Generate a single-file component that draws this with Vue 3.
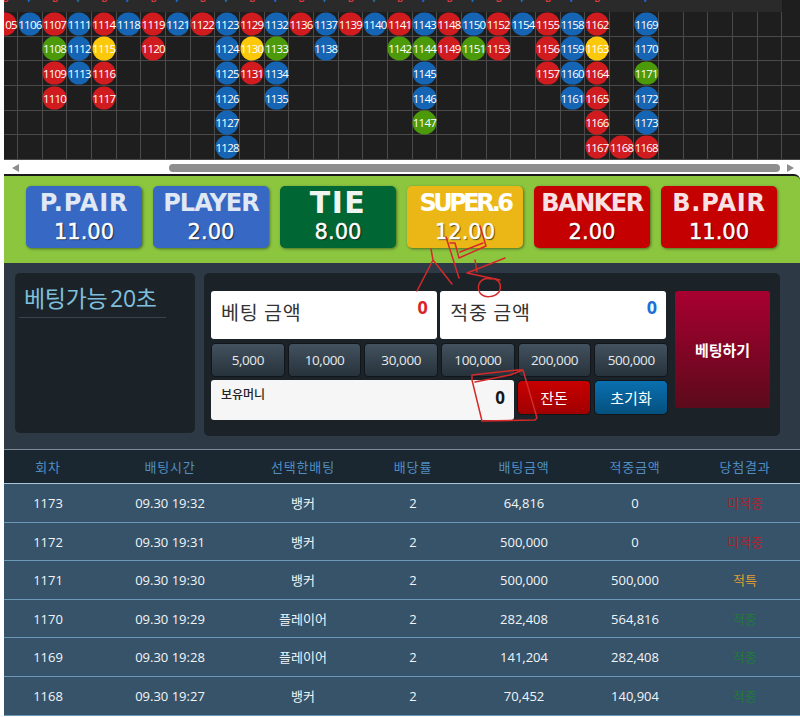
<script setup>
// 출목표 데이터: [번호, 색] 열 단위
const roadColumns = [
  ['1105r'],
  ['1106b'],
  ['1107r', '1108g', '1109r', '1110r'],
  ['1111b', '1112b', '1113b'],
  ['1114r', '1115y', '1116r', '1117r'],
  ['1118b'],
  ['1119r', '1120r'],
  ['1121b'],
  ['1122r'],
  ['1123b', '1124b', '1125b', '1126b', '1127b', '1128b'],
  ['1129r', '1130y', '1131r'],
  ['1132b', '1133g', '1134b', '1135b'],
  ['1136r'],
  ['1137b', '1138b'],
  ['1139r'],
  ['1140b'],
  ['1141r', '1142g'],
  ['1143b', '1144g', '1145b', '1146b', '1147g'],
  ['1148r', '1149r'],
  ['1150b', '1151g'],
  ['1152r', '1153r'],
  ['1154b'],
  ['1155r', '1156r', '1157r'],
  ['1158b', '1159b', '1160b', '1161b'],
  ['1162r', '1163y', '1164r', '1165r', '1166r', '1167r'],
  [null, null, null, null, null, '1168r'],
  ['1169b', '1170b', '1171g', '1172b', '1173b', '1168r']
]

const balls = []
roadColumns.forEach((col, c) => {
  col.forEach((v, r) => {
    if (v) balls.push({ key: c + '-' + r, c: c + 1, r: r + 1, no: v.slice(0, 4), color: v[4] })
  })
})

const cells = Array.from({ length: 33 * 6 }, (_, i) => i)
const flags = Array.from({ length: 27 }, (_, i) => (i === 25 ? '' : i === 26 ? 'P' : i % 2 === 0 ? 'B' : 'P'))

const odds = [
  { name: 'P.PAIR', val: '11.00', cls: 'blue wide' },
  { name: 'PLAYER', val: '2.00', cls: 'blue tight' },
  { name: 'TIE', val: '8.00', cls: 'green big' },
  { name: 'SUPER.6', val: '12.00', cls: 'yellow tighter' },
  { name: 'BANKER', val: '2.00', cls: 'red tight2' },
  { name: 'B.PAIR', val: '11.00', cls: 'red wide' }
]

const chips = ['5,000', '10,000', '30,000', '100,000', '200,000', '500,000']
const heads = ['회차', '배팅시간', '선택한배팅', '배당률', '배팅금액', '적중금액', '당첨결과']
const rows = [
  ['1173', '09.30 19:32', '뱅커', '2', '64,816', '0', '미적중', 'miss'],
  ['1172', '09.30 19:31', '뱅커', '2', '500,000', '0', '미적중', 'miss'],
  ['1171', '09.30 19:30', '뱅커', '2', '500,000', '500,000', '적특', 'draw'],
  ['1170', '09.30 19:29', '플레이어', '2', '282,408', '564,816', '적중', 'hit'],
  ['1169', '09.30 19:28', '플레이어', '2', '141,204', '282,408', '적중', 'hit'],
  ['1168', '09.30 19:27', '뱅커', '2', '70,452', '140,904', '적중', 'hit']
]
</script>

<template>
  <div class="page">
    <div class="road">
      <div class="flags">
        <span v-for="(f, i) in flags" :key="i" class="flag" :class="f === 'B' ? 'fb' : 'fp'">{{ f }}</span>
      </div>
      <div class="grid-wrap">
        <div class="grid">
          <i v-for="n in cells" :key="n" class="cell"></i>
        </div>
        <div class="grid balls">
          <span
            v-for="b in balls"
            :key="b.key"
            class="ball"
            :class="'c-' + b.color"
            :style="{ gridColumn: b.c, gridRow: b.r }"
          >{{ b.no }}</span>
        </div>
      </div>
    </div>

    <div class="scrollbar">
      <span class="arrow left"></span>
      <div class="track"><div class="thumb"></div></div>
      <span class="arrow right"></span>
    </div>

    <div class="main">
      <div class="odds">
        <div v-for="o in odds" :key="o.name" class="odd" :class="o.cls">
          <div class="odd-name">{{ o.name }}</div>
          <div class="odd-val">{{ o.val }}</div>
        </div>
      </div>

      <div class="bet">
        <div class="timer">
          <div class="timer-title">베팅가능 20초</div>
        </div>
        <div class="form">
          <div class="form-left">
            <div class="amounts">
              <div class="amount">
                <span class="amount-label">베팅 금액</span>
                <b class="amount-val red-t">0</b>
              </div>
              <div class="amount">
                <span class="amount-label">적중 금액</span>
                <b class="amount-val blue-t">0</b>
              </div>
            </div>
            <div class="chips">
              <button v-for="c in chips" :key="c" class="chip">{{ c }}</button>
            </div>
            <div class="money-row">
              <div class="money">
                <span class="money-label">보유머니</span>
                <b class="money-val">0</b>
              </div>
              <button class="act act-red">잔돈</button>
              <button class="act act-blue">초기화</button>
            </div>
          </div>
          <button class="submit">베팅하기</button>
        </div>
      </div>

      <div class="table">
        <div class="tr th">
          <div v-for="h in heads" :key="h">{{ h }}</div>
        </div>
        <div v-for="r in rows" :key="r[0] + r[1]" class="tr td">
          <div>{{ r[0] }}</div>
          <div>{{ r[1] }}</div>
          <div>{{ r[2] }}</div>
          <div>{{ r[3] }}</div>
          <div>{{ r[4] }}</div>
          <div>{{ r[5] }}</div>
          <div :class="r[7]">{{ r[6] }}</div>
        </div>
      </div>
    </div>

    <!-- 빨간 펜 낙서 -->
    <svg class="scribble" width="800" height="717" viewBox="0 0 800 717" fill="none" stroke="#d42a2a" stroke-width="1.5" stroke-linecap="round" stroke-linejoin="round">
      <path d="M417 291 L433 260 L431 249 M433 260 L452 284" />
      <path d="M446 237 L459 278" />
      <path d="M450 243 L455 243 L459 258 L486 246 L480 226 M460 252 L483 243" />
      <path d="M505 258 L467 273 L500 280 M475 260 L477 272" />
      <path d="M492 279 C480 276 476 286 480 293 C484 298 494 298 499 292 C502 286 500 281 495 279" />
      <path d="M472 375 L518 370 L523 370 L537 418 L535 420 L482 421 L472 380 Z M475 382 L510 375 L523 370" />
    </svg>
  </div>
</template>

<style scoped>
.page {
  position: relative;
  width: 800px;
  height: 717px;
  overflow: hidden;
  background: #fff;
  font-family: "Open Sans", "Noto Sans CJK KR", sans-serif;
}

.road {
  margin-left: 4px;
  background: #1e1e1e;
  height: 160px;
  overflow: hidden;
}
.flags {
  height: 12px;
  background: #2a2a2a;
  width: 789px;
  margin-left: -10.6px;
  display: flex;
}
.flag {
  width: 24.67px;
  flex: none;
  text-align: center;
  font-size: 9px;
  line-height: 8px;
  height: 12px;
  margin-top: -5px;
  font-family: "Roboto", sans-serif;
  font-weight: 700;
}
.fb { color: #d8383c; }
.fp { color: #1d78d6; }

.grid-wrap {
  display: grid;
  margin-left: -10.6px;
}
.grid {
  grid-area: 1 / 1;
  display: grid;
  grid-template-columns: repeat(33, 24.67px);
  grid-template-rows: repeat(6, 24.67px);
}
.cell {
  border-right: 1px solid #4a4a4a;
  border-bottom: 1px solid #4a4a4a;
}
.balls .ball {
  place-self: center;
  width: 23.5px;
  height: 23.5px;
  border-radius: 50%;
  color: #fff;
  font-size: 11.5px;
  line-height: 23.5px;
  text-align: center;
  letter-spacing: -0.8px;
  white-space: nowrap;
  overflow: visible;
  transform: translate(-0.5px, -0.5px);
}
.c-r { background: #d01c1f; }
.c-b { background: #1565b4; }
.c-g { background: #4c9a0a; }
.c-y { background: #fcc80a; }

.scrollbar {
  height: 12px;
  margin-left: 4px;
  display: flex;
  align-items: center;
  background: #fff;
}
.track {
  flex: 1;
  margin: 0 7px 0 7px;
  display: flex;
  justify-content: flex-end;
}
.thumb {
  width: 611px;
  height: 8px;
  border-radius: 4px;
  background: #8e8e8e;
  margin-top: 3px;
}
.arrow {
  flex: none;
  width: 0;
  height: 0;
  border-top: 4px solid transparent;
  border-bottom: 4px solid transparent;
  margin-top: 3px;
}
.arrow.left {
  border-right: 7px solid #8e8e8e;
  margin-left: 8px;
}
.arrow.right {
  border-left: 7px solid #8e8e8e;
  margin-right: 6px;
}

.main {
  margin: 2px 0 0 4px;
  background: #1a2630;
  border-top: 2px solid #1a1a1a;
  border-top-right-radius: 6px;
  overflow: hidden;
}
.odds {
  height: 87px;
  background: #8cc63f;
  display: flex;
  gap: 11px;
  padding: 10px 0 0 22px;
  box-sizing: border-box;
}
.odd {
  width: 116px;
  height: 61.5px;
  border-radius: 5px;
  box-shadow: 1px 1px 3px rgba(0, 0, 0, 0.45);
  text-align: center;
  color: #fff;
  font-family: "DejaVu Sans", sans-serif;
}
.blue { background: #3668c4; }
.green { background: #006633; }
.yellow { background: #ebb717; }
.red { background: #c40000; }
.odd-name {
  font-size: 24px;
  line-height: 30px;
  padding-top: 2px;
  font-weight: 700;
  color: #dfe8f4;
  white-space: nowrap;
}
.red .odd-name { color: #f8e0e4; }
.yellow .odd-name { color: #fff; }
.green .odd-name { color: #eef4f0; }
.wide .odd-name { letter-spacing: 0.8px; }
.tight .odd-name { letter-spacing: -1px; }
.tight2 .odd-name { letter-spacing: -1.5px; }
.tighter .odd-name { letter-spacing: -3.5px; }
.big .odd-name { font-size: 30px; letter-spacing: 1.5px; }
.odd-val {
  font-size: 21px;
  line-height: 28px;
  -webkit-text-stroke: 0.4px #fff;
  text-shadow: 1px 1px 1px rgba(0, 0, 0, 0.7);
}

.bet {
  height: 187px;
  box-sizing: border-box;
  background: #2d3a45;
  border-bottom: 1px solid #7a8a96;
  padding: 10px 20px 0 11px;
  display: flex;
  gap: 9px;
  align-items: flex-start;
}
.timer {
  width: 180px;
  height: 160px;
  flex: none;
  background: #1b2329;
  border-radius: 5px;
  padding: 0 4px;
  box-sizing: border-box;
}
.timer-title {
  width: 147px;
  padding: 11px 0 4px 5px;
  box-sizing: border-box;
  font-size: 23px;
  line-height: 29px;
  word-spacing: -3px;
  letter-spacing: -0.3px;
  color: #7fbfdc;
  border-bottom: 1px solid #3a444c;
  white-space: nowrap;
}
.form {
  flex: 1;
  height: 163px;
  background: #1b2329;
  border-radius: 5px;
  display: flex;
  gap: 7px;
  padding: 18px 10px 0 7px;
  box-sizing: border-box;
}
.form-left {
  width: 457px;
  flex: none;
}
.amounts {
  display: flex;
  gap: 3.5px;
  width: 455px;
}
.amount {
  flex: 1;
  height: 48px;
  background: #fff;
  border-radius: 3px;
  display: flex;
  justify-content: space-between;
  padding: 0 10px;
  box-sizing: border-box;
}
.amount-label {
  font-size: 19.5px;
  line-height: 44px;
  color: #333;
  letter-spacing: 0.7px;
}
.amount-val {
  font-size: 18px;
  line-height: 28px;
  padding-top: 2px;
  margin-right: -1px;
}
.red-t { color: #d9232a; }
.blue-t { color: #1c6fd6; }
.chips {
  display: flex;
  gap: 3px;
  margin-top: 4px;
}
.chip {
  flex: 1;
  height: 34px;
  padding: 0;
  border: 1px solid #10161b;
  border-radius: 4px;
  background: linear-gradient(#43525f, #27323b);
  color: #e6e9ec;
  font: 13.5px "Open Sans", sans-serif;
  letter-spacing: -0.4px;
}
.money-row {
  display: flex;
  gap: 3px;
  margin-top: 3px;
  align-items: flex-start;
}
.money {
  width: 303px;
  height: 40px;
  flex: none;
  background: #f6f6f6;
  border-radius: 3px;
  display: flex;
  justify-content: space-between;
  box-sizing: border-box;
  padding: 0 9px 0 10px;
}
.money-label {
  font-size: 12px;
  font-weight: 500;
  line-height: 29px;
  color: #222;
}
.money-val {
  font-size: 17px;
  line-height: 35px;
  color: #14181c;
}
.act {
  width: 74px;
  height: 35px;
  padding: 0;
  border: 1px solid #10161b;
  border-radius: 5px;
  color: #fff;
  font: 15px "Noto Sans CJK KR", sans-serif;
}
.act-red { background: linear-gradient(#c80000, #a00000); }
.act-blue { background: linear-gradient(#0a70b0, #04507e); }
.submit {
  width: 95px;
  height: 117px;
  flex: none;
  padding: 0;
  border: 0;
  border-radius: 3px;
  background: linear-gradient(#a80030, #5c0a1c);
  color: #fff;
  font: 700 15px "Noto Sans CJK KR", sans-serif;
}

.tr {
  display: grid;
  grid-template-columns: 88px 156px 110px 110px 112px 110px 110px;
  text-align: center;
}
.th {
  height: 34px;
  line-height: 35px;
  font-size: 13px;
  color: #4f8fc4;
  letter-spacing: 0.8px;
  background: #1a2630;
  border-bottom: 1px solid #a9c6d6;
  box-sizing: border-box;
}
.td {
  height: 38.6px;
  line-height: 39px;
  font-size: 13px;
  color: #f2f5f7;
  background: #36536a;
  border-bottom: 1px solid #6a9ab8;
  box-sizing: border-box;
}
.miss { color: #b0232f; }
.draw { color: #e0a030; }
.hit { color: #1f7a3c; }

.scribble {
  position: absolute;
  left: 0;
  top: 0;
  pointer-events: none;
}
</style>

<style>
html, body { background: #fff; }
</style>
